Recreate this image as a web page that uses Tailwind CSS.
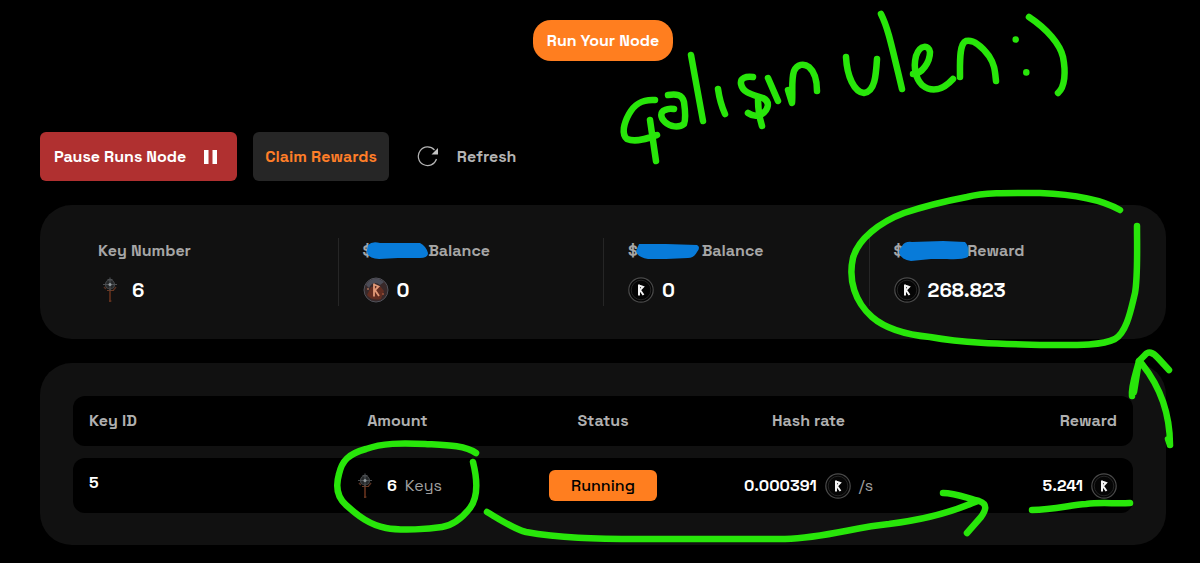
<!DOCTYPE html>
<html lang="en">
<head>
    <meta charset="UTF-8" />
    <meta name="viewport" content="width=device-width, initial-scale=1.0" />
    <title>Run Your Node</title>
    <script src="https://cdn.jsdelivr.net/npm/@tailwindcss/browser@4"></script>
</head>
<body class="relative min-h-screen overflow-x-hidden bg-black font-['Space_Grotesk',Inter,sans-serif] text-base text-white">

    <!-- Shared icons -->
    <svg class="hidden" aria-hidden="true">
        <symbol id="coin" viewBox="0 0 26 26">
            <circle cx="13" cy="13" r="12.2" fill="#050505" stroke="#4a4a4a" stroke-width="1.2" />
            <circle cx="13" cy="13" r="9.8" fill="none" stroke="#242424" stroke-width="1" />
            <path d="M11 7.500V18.500M11 8.500L15 10L12 13L15.500 18" fill="none" stroke="#f4f4f4" stroke-width="2" />
        </symbol>
        <symbol id="ember" viewBox="0 0 26 26">
            <circle cx="13" cy="13" r="12" fill="#38292a" stroke="#50525a" stroke-width="1" />
            <path d="M3 8A11 11 0 0 1 21 5L17 8Q10 3 6 11Z" fill="#4b4c57" />
            <path d="M4 18Q9 24 18 22L21 14L17 9L8 10Z" fill="#622d21" />
            <circle cx="5" cy="12" r="1" fill="#a36a52" />
            <circle cx="20" cy="17" r="1" fill="#9c5138" />
            <path d="M11 6.500V19.500M11 7.500L15.500 9.500L12 13L16 19" fill="none" stroke="#e39a78" stroke-width="1.800" />
        </symbol>
        <symbol id="key" viewBox="0 0 26 26">
            <path d="M12 10V25" stroke="#5c2d1a" stroke-width="1.800" />
            <path d="M9 13.500H16M11 24H13.500" stroke="#6b3923" stroke-width="1.200" />
            <circle cx="12" cy="7.500" r="4.500" fill="#25282a" stroke="#46494b" stroke-width="1.200" />
            <path d="M12 0.500V14M5 7.500H19M9.500 2.500H14.500" stroke="#4a4d50" stroke-width="1.200" />
            <path d="M6 10L8 12M18 10L15.500 13" stroke="#573122" stroke-width="1.500" />
            <circle cx="12" cy="7.500" r="1.500" fill="#90989c" />
        </symbol>
    </svg>

    <main class="flex flex-col pt-5 pr-[34px] pb-4 pl-10">
        <button type="button" class="h-[41px] self-center rounded-[18px] bg-[#ff7e1f] px-3.5 pt-px font-bold">Run Your Node</button>

        <div class="mt-[71px] flex items-center gap-4">
            <button type="button" class="flex h-[49px] items-center gap-[18px] rounded-md bg-[#b03030] pr-5 pl-3.5 font-bold">
                Pause Runs Node
                <svg class="h-3.5 w-[13px]" viewBox="0 0 13 14" fill="#fff" aria-hidden="true">
                    <path d="M0 0H4.500V14H0ZM8.500 0H13V14H8.500Z" />
                </svg>
            </button>
            <button type="button" class="h-[49px] rounded-md bg-[#262626] px-3 font-bold text-[#ff7e28]">Claim Rewards</button>
            <button type="button" class="flex h-[49px] items-center gap-[18px] pl-3 font-semibold text-[#b4b4b4]">
                <svg class="size-[22px]" viewBox="0 0 22 22" fill="none" aria-hidden="true">
                    <path d="M17.500 4A9.300 9.300 0 1 0 19.500 13" stroke="#b4b4b4" stroke-width="1.200" />
                    <path d="M21 2V8.500H14.500Z" fill="#c4c4c4" />
                </svg>
                Refresh
            </button>
        </div>

        <section class="mt-6 grid grid-cols-4 rounded-[32px] bg-[#111] px-8 py-[33px]">
            <div class="flex flex-col gap-3.5 pb-1 pl-[26px]">
                <h2 class="leading-[26px] font-bold text-[#a6a6a6]">Key Number</h2>
                <p class="flex h-6 items-center gap-2 text-xl font-bold"><svg class="size-[26px]"><use href="#key" /></svg>6</p>
            </div>
            <div class="flex flex-col gap-3.5 border-l border-[#262626] pb-1 pl-6">
                <h2 class="flex items-center leading-[26px] font-semibold text-[#a6a6a6]">
                    $<svg class="-mr-0.5 -ml-1.5 h-5 w-16" viewBox="0 0 64 20"><path d="M2 4Q6 0 14 2L34 2L54 2Q60 5 62 12Q62 17 54 17L32 17L13 18Q0 17 1 9Z" fill="#087bd9" /></svg>Balance
                </h2>
                <p class="flex h-6 items-center gap-2 text-xl font-bold"><svg class="size-[26px]"><use href="#ember" /></svg>0</p>
            </div>
            <div class="flex flex-col gap-3.5 border-l border-[#262626] pb-1 pl-6">
                <h2 class="flex items-center leading-[26px] font-semibold text-[#a6a6a6]">
                    $<svg class="-ml-0.5 h-5 w-16" viewBox="0 0 64 20"><path d="M3 3L30 3L61 4Q65 6 61 11Q58 17 52 17L30 18L12 18Q1 16 0 10Z" fill="#087bd9" /></svg><span class="pl-0.5">Balance</span>
                </h2>
                <p class="flex h-6 items-center gap-2 text-xl font-bold"><svg class="size-[26px]"><use href="#coin" /></svg>0</p>
            </div>
            <div class="flex flex-col gap-3.5 border-l border-[#262626] pb-1 pl-6">
                <h2 class="flex items-center leading-[26px] font-semibold text-[#a6a6a6]">
                    $<svg class="-mr-0.5 -ml-1 h-5 w-[70px]" viewBox="0 0 70 20"><path d="M3 5Q6 0 13 1L44 0L66 1Q71 6 69 16Q62 19 48 18L32 18L12 20Q0 18 0 10Z" fill="#087bd9" /></svg>Reward
                </h2>
                <p class="flex h-6 items-center gap-2 text-xl font-bold"><svg class="size-[26px]"><use href="#coin" /></svg>268.823</p>
            </div>
        </section>

        <section class="mt-6 rounded-[32px] bg-[#111] px-[33px] pt-[33px] pb-8">
            <table class="block">
                <thead class="block">
                    <tr class="grid grid-cols-5 rounded-xl bg-black px-4 py-3 leading-[26px] text-[#b0b0b0]">
                        <th class="text-left font-semibold">Key ID</th>
                        <th class="font-semibold">Amount</th>
                        <th class="font-semibold">Status</th>
                        <th class="font-semibold">Hash rate</th>
                        <th class="text-right font-semibold">Reward</th>
                    </tr>
                </thead>
                <tbody class="mt-3 block">
                    <tr class="grid grid-cols-5 rounded-xl bg-black px-4 py-3 font-bold">
                        <td class="leading-[26px]">5</td>
                        <td class="flex items-center justify-center gap-2">
                            <svg class="size-[26px]"><use href="#key" /></svg>6
                            <span class="font-normal text-[#a0a0a0]">Keys</span>
                        </td>
                        <td class="flex justify-center">
                            <span class="rounded-md bg-[#ff7e1f] px-[22px] leading-[31px] font-medium text-black">Running</span>
                        </td>
                        <td class="flex items-center justify-center gap-2">
                            0.000391<svg class="size-[26px]"><use href="#coin" /></svg>
                            <span class="font-normal text-[#a0a0a0]">/s</span>
                        </td>
                        <td class="flex items-center justify-end gap-2">
                            5.241<svg class="size-[26px]"><use href="#coin" /></svg>
                        </td>
                    </tr>
                </tbody>
            </table>
        </section>
    </main>

    <!-- Hand-drawn notes -->
    <svg class="pointer-events-none absolute top-0 left-0 h-[563px] w-[1200px]" viewBox="0 0 1200 563" fill="none" stroke="#28e60a" stroke-width="6.500" stroke-linecap="round" stroke-linejoin="round" role="img" aria-label="çalışın ulen :)">
        <!-- çalışın -->
        <path d="M655 100C641 99 634 105 629 114C624 123 621 134 627 139C636 143 649 138 657 135M650 120L656 161" />
        <path d="M668 95C676 94 682 94 684 102C685 109 686 119 684 124C679 128 670 127 665 122C660 117 660 112 665 110Q669 108 674 109" />
        <path d="M691 55L703 121M718 89Q720 103 725 114" />
        <path d="M753 77C746 76 740 78 741 84C743 94 755 95 763 98C771 102 768 110 762 114Q755 118 748 113M758 100Q758 113 762 126M768 78L778 101" />
        <path d="M788 90L792 103C793 92 791 80 794 71C797 64 804 63 809 67C816 73 817 82 817 91" />
        <!-- ulen :) -->
        <path d="M846 57C847 76 854 92 864 93C875 92 876 75 877 59" />
        <path d="M881 14C888 28 891 43 902 89" />
        <path d="M913 74C922 74 930 62 930 52C929 45 920 44 916 56C913 68 916 79 922 85C932 93 943 90 953 79" />
        <path d="M960 77C960 62 959 44 966 41C975 39 983 48 989 56C995 65 995 72 996 81" />
        <path d="M1029 17C1047 29 1060 44 1063 57C1066 72 1065 87 1058 93" />
        <path d="M1015.700 39.500V39.600M1026.300 72.300V72.400" />
        <!-- circle round the reward -->
        <path d="M1120 210C1099 198 1066 194 1040 193C1015 193 987 192 967 197C946 201 919 208 904 213C880 222 858 239 853 258C848 280 855 302 872 317C887 330 909 335 930 337C969 344 1009 344 1046 345C1072 345 1101 346 1115 339C1127 332 1131 309 1135 293C1138 276 1137 246 1137 226" />
        <!-- circle round the amount -->
        <path d="M476 453C465 445 444 445 425 444C401 443 382 443 366 449C348 454 342 461 339 474C335 488 338 498 346 505C358 516 370 525 386 528C402 531 429 529 442 527C454 525 463 517 470 508C479 496 477 478 473 462" />
        <!-- arrow to the row reward -->
        <path d="M487 512C502 521 514 529 526 532C559 538 594 539 640 539H785C825 538 855 527 889 524C921 520 946 514 970 504" />
        <path d="M943 493C956 493 969 499 979 501C988 504 986 510 981 517L967 533M970 504L978 501" />
        <path d="M1032 510C1054 510 1070 505 1086 504C1102 502 1115 504 1130 503" />
        <!-- arrow up to the total -->
        <path d="M1170 445L1168 439M1170 445C1170 415 1162 389 1142 364M1132 396C1131 386 1136 373 1139 361L1134 392" />
        <path d="M1139 361L1145 355Q1150 349 1158 358L1169 370" />
    </svg>
</body>
</html>
